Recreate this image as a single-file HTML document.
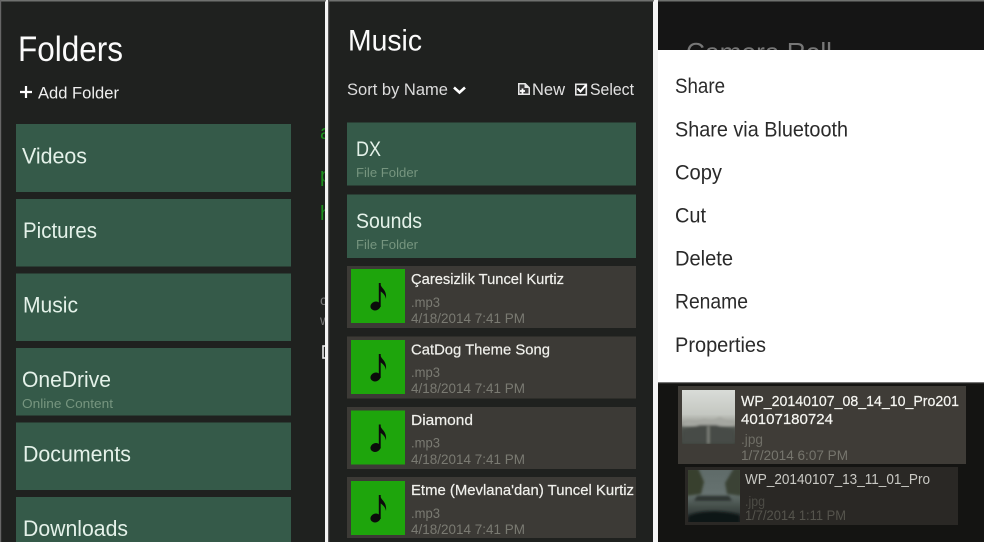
<!DOCTYPE html>
<html lang="en">
<head>
<meta charset="utf-8">
<title>Files app</title>
<style>
html,body{margin:0;padding:0;background:#fff;width:984px;height:542px;overflow:hidden}
svg{display:block;position:absolute;left:0;top:0;filter:blur(.35px)}
text{font-family:"Liberation Sans",sans-serif;white-space:pre}
.g{fill:#e4f1e9}
.s{fill:#76957f;font-size:13px}
.t{fill:#f0f0ec;font-size:15px;stroke:#f0f0ec;stroke-width:.2px}
.m{fill:#7a7a72;font-size:14px}
.k{fill:#2a2a2a;font-size:21px}
</style>
</head>
<body>
<svg width="984" height="542" viewBox="0 0 984 542" xmlns="http://www.w3.org/2000/svg">
<defs>
<clipPath id="c1"><rect x="1" y="1" width="324" height="541"/></clipPath>
<clipPath id="c3"><rect x="658" y="1" width="326" height="49"/></clipPath>
<clipPath id="th1"><rect x="682" y="390" width="53" height="54"/></clipPath>
<clipPath id="th2"><rect x="688" y="470" width="52" height="52"/></clipPath>
<filter id="soft" x="-10%" y="-10%" width="120%" height="120%"><feGaussianBlur stdDeviation="1.2"/></filter>
<linearGradient id="sky" x1="0" y1="0" x2="0" y2="1"><stop offset="0" stop-color="#d9dcd8"/><stop offset=".45" stop-color="#c4c7c1"/><stop offset=".62" stop-color="#9a9c95"/><stop offset=".7" stop-color="#555a54"/><stop offset="1" stop-color="#383d35"/></linearGradient>
<linearGradient id="sky2" x1="0" y1="0" x2="0" y2="1"><stop offset="0" stop-color="#5f6b69"/><stop offset=".45" stop-color="#667270"/><stop offset=".7" stop-color="#454f4a"/><stop offset="1" stop-color="#22272a"/></linearGradient>
</defs>
<rect width="984" height="542" fill="#f4f4f4"/>

<!-- Panel 1 -->
<rect x="1" y="1" width="324" height="541" fill="#1f211f"/>
<rect x="0" y="0" width="326" height="1.5" fill="#6f716f"/>
<rect x="0" y="0" width="1.2" height="542" fill="#666"/>
<text x="18" y="61" font-size="35" fill="#fbfbfb" textLength="105" lengthAdjust="spacingAndGlyphs">Folders</text>
<path d="M26 86v12M20 92h12" stroke="#fff" stroke-width="2.2" fill="none"/>
<text x="38" y="98.500" font-size="17" fill="#efefef" textLength="81" lengthAdjust="spacingAndGlyphs">Add Folder</text>

<rect x="16" y="124" width="275" height="68" fill="#355a49"/>
<rect x="16" y="199" width="275" height="67.500" fill="#355a49"/>
<rect x="16" y="273.500" width="275" height="67.500" fill="#355a49"/>
<rect x="16" y="348" width="275" height="67.500" fill="#355a49"/>
<rect x="16" y="422.500" width="275" height="67.500" fill="#355a49"/>
<rect x="16" y="497" width="275" height="45" fill="#355a49"/>
<text class="g" x="22" y="163.500" font-size="22" textLength="65" lengthAdjust="spacingAndGlyphs">Videos</text>
<text class="g" x="23" y="238" font-size="22" textLength="74" lengthAdjust="spacingAndGlyphs">Pictures</text>
<text class="g" x="23" y="312.500" font-size="22" textLength="55" lengthAdjust="spacingAndGlyphs">Music</text>
<text class="g" x="22" y="387" font-size="22" textLength="89" lengthAdjust="spacingAndGlyphs">OneDrive</text>
<text class="s" x="22" y="408" textLength="91" lengthAdjust="spacingAndGlyphs">Online Content</text>
<text class="g" x="23" y="461.500" font-size="22" textLength="108" lengthAdjust="spacingAndGlyphs">Documents</text>
<text class="g" x="23" y="536" font-size="22" textLength="105" lengthAdjust="spacingAndGlyphs">Downloads</text>
<g clip-path="url(#c1)">
<text x="320" y="139" font-size="20" fill="#1f8f1f">a</text>
<text x="320" y="182" font-size="20" fill="#1f8f1f">p</text>
<text x="320" y="220" font-size="20" fill="#1f8f1f">h</text>
<text x="320" y="305" font-size="14" fill="#777">c</text>
<text x="320" y="325" font-size="14" fill="#777">w</text>
<rect x="323" y="346" width="6" height="12" fill="none" stroke="#e8e8e8" stroke-width="1.6"/>
</g>

<!-- Panel 2 -->
<rect x="329" y="1" width="324" height="541" fill="#1f211f"/>
<rect x="328" y="0" width="326" height="1.5" fill="#6f716f"/>
<rect x="328" y="0" width="1.200" height="542" fill="#555"/>
<text x="348" y="50.500" font-size="30" fill="#fbfbfb" textLength="74" lengthAdjust="spacingAndGlyphs">Music</text>
<text x="347" y="95" font-size="17" fill="#dcdcdc" textLength="101" lengthAdjust="spacingAndGlyphs">Sort by Name</text>
<path d="M454 87.500l5.500 5 5.500-5" stroke="#fff" stroke-width="2.600" fill="none"/>
<path d="M518 83h7.500l4.500 4.500V95h-12z" fill="#e6e6e6"/>
<path d="M519.500 84.500h5v3.500h4v5.500h-9z" fill="#3a3a3a"/>
<path d="M520 91h5M522.500 88.500v5" stroke="#fff" stroke-width="1.800"/>
<text x="532" y="95" font-size="17" fill="#e2e2e2" textLength="33" lengthAdjust="spacingAndGlyphs">New</text>
<rect x="575.800" y="84.300" width="10.500" height="10.500" fill="none" stroke="#e6e6e6" stroke-width="1.600"/>
<path d="M577.500 88.500l3 3 6-7" stroke="#fff" stroke-width="2" fill="none"/>
<text x="590" y="95" font-size="17" fill="#e2e2e2" textLength="44" lengthAdjust="spacingAndGlyphs">Select</text>

<rect x="347" y="122.500" width="289" height="63" fill="#355a49"/>
<rect x="347" y="194.500" width="289" height="63.500" fill="#355a49"/>
<text class="g" x="356" y="156" font-size="21" textLength="25" lengthAdjust="spacingAndGlyphs">DX</text>
<text class="s" x="356" y="177" textLength="62" lengthAdjust="spacingAndGlyphs">File Folder</text>
<text class="g" x="356" y="228" font-size="21" textLength="66" lengthAdjust="spacingAndGlyphs">Sounds</text>
<text class="s" x="356" y="249" textLength="62" lengthAdjust="spacingAndGlyphs">File Folder</text>

<!-- tracks -->
<rect x="347" y="266" width="289" height="62" fill="#3c3a36"/>
<rect x="351" y="269" width="54" height="54" fill="#1ea50c"/>
<g transform="translate(351 269)"><ellipse cx="24.500" cy="37" rx="5.200" ry="4.400" transform="rotate(-20 24.500 37)" fill="#0b0b0b"/><rect x="27.800" y="14" width="1.900" height="24" fill="#0b0b0b"/><path d="M29 14C30 20 36 20 35 30 34.300 26 32 24 29 22Z" fill="#0b0b0b"/></g>
<text class="t" x="411" y="284" textLength="153" lengthAdjust="spacingAndGlyphs">Çaresizlik Tuncel Kurtiz</text>
<text class="m" x="411" y="307" textLength="29" lengthAdjust="spacingAndGlyphs">.mp3</text>
<text class="m" x="411" y="323" textLength="114" lengthAdjust="spacingAndGlyphs">4/18/2014 7:41 PM</text>

<rect x="347" y="336.500" width="289" height="62" fill="#3c3a36"/>
<rect x="351" y="340" width="54" height="54" fill="#1ea50c"/>
<g transform="translate(351 340)"><ellipse cx="24.500" cy="37" rx="5.200" ry="4.400" transform="rotate(-20 24.500 37)" fill="#0b0b0b"/><rect x="27.800" y="14" width="1.900" height="24" fill="#0b0b0b"/><path d="M29 14C30 20 36 20 35 30 34.300 26 32 24 29 22Z" fill="#0b0b0b"/></g>
<text class="t" x="411" y="354.500" textLength="139" lengthAdjust="spacingAndGlyphs">CatDog Theme Song</text>
<text class="m" x="411" y="377" textLength="29" lengthAdjust="spacingAndGlyphs">.mp3</text>
<text class="m" x="411" y="393" textLength="114" lengthAdjust="spacingAndGlyphs">4/18/2014 7:41 PM</text>

<rect x="347" y="407" width="289" height="62" fill="#3c3a36"/>
<rect x="351" y="410.500" width="54" height="54" fill="#1ea50c"/>
<g transform="translate(351 410.500)"><ellipse cx="24.500" cy="37" rx="5.200" ry="4.400" transform="rotate(-20 24.500 37)" fill="#0b0b0b"/><rect x="27.800" y="14" width="1.900" height="24" fill="#0b0b0b"/><path d="M29 14C30 20 36 20 35 30 34.300 26 32 24 29 22Z" fill="#0b0b0b"/></g>
<text class="t" x="411" y="425" textLength="62" lengthAdjust="spacingAndGlyphs">Diamond</text>
<text class="m" x="411" y="447.500" textLength="29" lengthAdjust="spacingAndGlyphs">.mp3</text>
<text class="m" x="411" y="464" textLength="114" lengthAdjust="spacingAndGlyphs">4/18/2014 7:41 PM</text>

<rect x="347" y="477" width="289" height="61" fill="#3c3a36"/>
<rect x="351" y="481" width="54" height="54" fill="#1ea50c"/>
<g transform="translate(351 481)"><ellipse cx="24.500" cy="37" rx="5.200" ry="4.400" transform="rotate(-20 24.500 37)" fill="#0b0b0b"/><rect x="27.800" y="14" width="1.900" height="24" fill="#0b0b0b"/><path d="M29 14C30 20 36 20 35 30 34.300 26 32 24 29 22Z" fill="#0b0b0b"/></g>
<text class="t" x="411" y="495" textLength="223" lengthAdjust="spacingAndGlyphs">Etme (Mevlana'dan) Tuncel Kurtiz</text>
<text class="m" x="411" y="518" textLength="29" lengthAdjust="spacingAndGlyphs">.mp3</text>
<text class="m" x="411" y="534" textLength="114" lengthAdjust="spacingAndGlyphs">4/18/2014 7:41 PM</text>

<!-- Panel 3 -->
<rect x="658" y="1" width="326" height="49" fill="#151515"/>
<rect x="658" y="0" width="326" height="1.500" fill="#6f716f"/>
<g clip-path="url(#c3)"><text x="686" y="61" font-size="26" fill="#777" textLength="146" lengthAdjust="spacingAndGlyphs">Camera Roll</text></g>
<rect x="658" y="50" width="326" height="332.500" fill="#fff"/>
<text class="k" x="675" y="93" textLength="50" lengthAdjust="spacingAndGlyphs">Share</text>
<text class="k" x="675" y="136.500" textLength="173" lengthAdjust="spacingAndGlyphs">Share via Bluetooth</text>
<text class="k" x="675" y="179.500" textLength="47" lengthAdjust="spacingAndGlyphs">Copy</text>
<text class="k" x="675" y="222.500" textLength="31" lengthAdjust="spacingAndGlyphs">Cut</text>
<text class="k" x="675" y="265.500" textLength="58" lengthAdjust="spacingAndGlyphs">Delete</text>
<text class="k" x="675" y="308.500" textLength="73" lengthAdjust="spacingAndGlyphs">Rename</text>
<text class="k" x="675" y="352" textLength="91" lengthAdjust="spacingAndGlyphs">Properties</text>

<rect x="658" y="382.500" width="326" height="159.500" fill="#141412"/>
<rect x="658" y="382" width="326" height="1.200" fill="#777"/>
<rect x="678" y="386" width="288" height="78" fill="#3f3c37"/>
<rect x="682" y="390" width="53" height="54" fill="url(#sky)"/>
<g clip-path="url(#th1)"><g filter="url(#soft)">
<path d="M682 424l6-4 8 2 8-3 8 2 8-4 7 4 8 1v4h-53z" fill="#a5a7a1"/>
<path d="M682 430l18-5h16l19 5v14h-53z" fill="#474c46"/>
<rect x="707.500" y="426" width="1.800" height="18" fill="#8a8d86"/>
</g></g>
<text x="741" y="406" font-size="15" fill="#f6f6f2" stroke="#f6f6f2" stroke-width=".2" textLength="218" lengthAdjust="spacingAndGlyphs">WP_20140107_08_14_10_Pro201</text>
<text x="741" y="424" font-size="15" fill="#f6f6f2" stroke="#f6f6f2" stroke-width=".2" textLength="92" lengthAdjust="spacingAndGlyphs">40107180724</text>
<text x="741" y="444" font-size="14" fill="#6f6e66" textLength="22" lengthAdjust="spacingAndGlyphs">.jpg</text>
<text x="741" y="460" font-size="14" fill="#76756d" textLength="107" lengthAdjust="spacingAndGlyphs">1/7/2014 6:07 PM</text>

<rect x="685" y="467" width="273" height="58" fill="#2a2825"/>
<rect x="688" y="470" width="52" height="52" fill="url(#sky2)"/>
<g clip-path="url(#th2)"><g filter="url(#soft)">
<path d="M686 468h12l6 14-3 12-15 2z" fill="#39412f"/>
<path d="M742 468h-8l-9 15 2 11 15 2z" fill="#3a4236"/>
<path d="M697 496h32l3 5h-38z" fill="#2e3431"/>
<path d="M688 516c12-6 34-6 52-1v9h-52z" fill="#101312"/>
</g></g>
<text x="745" y="484" font-size="15" fill="#c9c9c4" textLength="185" lengthAdjust="spacingAndGlyphs">WP_20140107_13_11_01_Pro</text>
<text x="745" y="506" font-size="14" fill="#4c4b45" textLength="20" lengthAdjust="spacingAndGlyphs">.jpg</text>
<text x="745" y="520" font-size="14" fill="#55544d" textLength="101" lengthAdjust="spacingAndGlyphs">1/7/2014 1:11 PM</text>
</svg>
</body>
</html>
